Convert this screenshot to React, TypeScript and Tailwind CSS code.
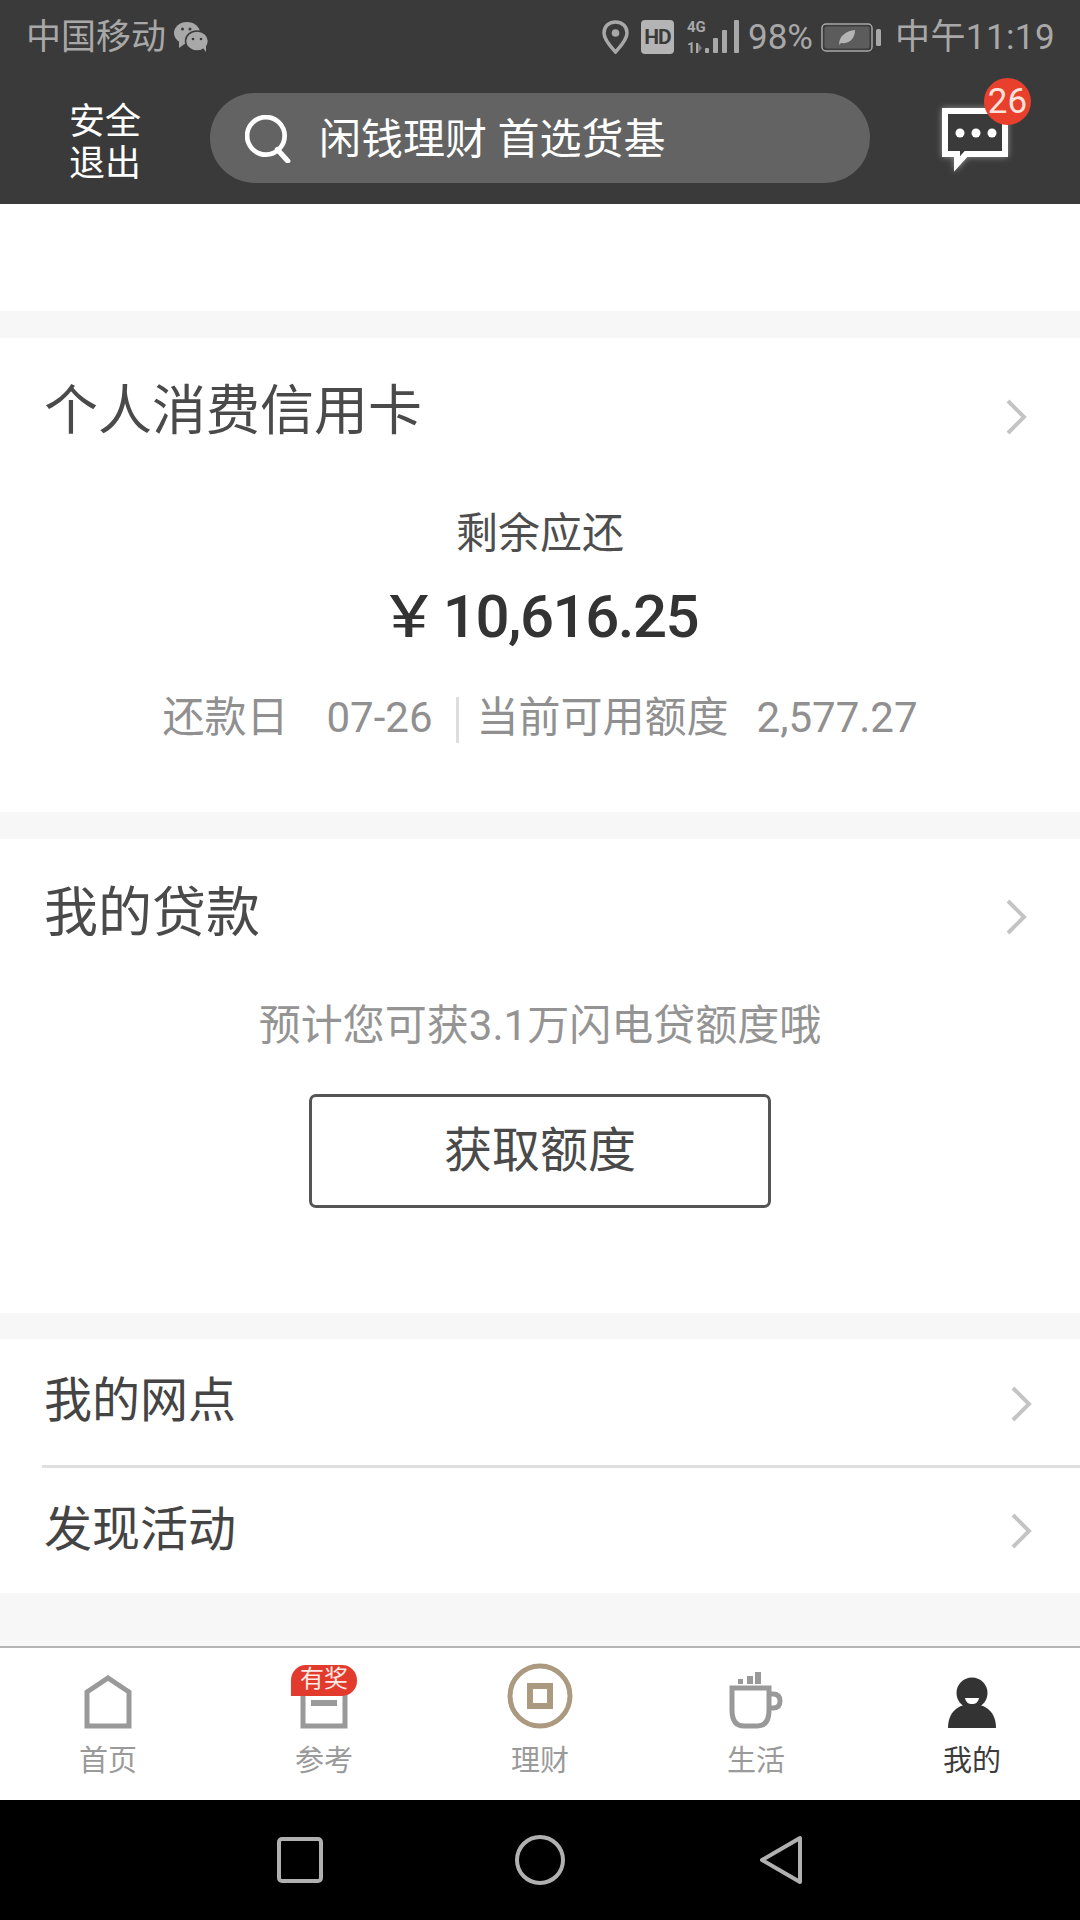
const CJK = "font-['Roboto','Noto_Sans_CJK_SC',sans-serif]";

function Chevron() {
  return (
    <svg width="22" height="36" viewBox="0 0 22 36" fill="none" className="shrink-0">
      <path d="M3 2 L19 18 L3 34" stroke="#c4c4c4" strokeWidth="4" />
    </svg>
  );
}

function StatusBar() {
  return (
    <div className="h-[72px] flex items-center justify-between pl-[26px] pr-[25px] pt-[2px] text-[#a8a8a8]">
      <div className="flex items-center gap-[7px]">
        <span className="text-[35px] leading-none">中国移动</span>
        <svg width="36" height="32" viewBox="0 0 36 32">
          <ellipse cx="14" cy="12" rx="13" ry="11" fill="#a8a8a8" />
          <path d="M6 19 L6 27 L13 22 Z" fill="#a8a8a8" />
          <ellipse cx="24" cy="20" rx="11.5" ry="10" fill="#a8a8a8" stroke="#3a3a3a" strokeWidth="1.5" />
          <path d="M30 27 L33 31 L33 24 Z" fill="#a8a8a8" />
          <circle cx="9.5" cy="8" r="1.5" fill="#3a3a3a" />
          <circle cx="17" cy="8" r="1.5" fill="#3a3a3a" />
          <circle cx="20" cy="18" r="1.3" fill="#3a3a3a" />
          <circle cx="28" cy="18" r="1.3" fill="#3a3a3a" />
        </svg>
      </div>
      <div className="flex items-center">
        <svg width="27" height="34" viewBox="0 0 27 34">
          <path d="M13.5 2 C6 2 2 7 2 13 C2 20 9 27 13.5 32 C18 27 25 20 25 13 C25 7 21 2 13.5 2 Z" fill="none" stroke="#a8a8a8" strokeWidth="3.5" />
          <circle cx="13.5" cy="13" r="3.8" fill="#a8a8a8" />
        </svg>
        <div className="ml-[12px] w-[33px] h-[34px] rounded-[4px] bg-[#b4b4b4] flex items-center justify-center text-[#3a3a3a] text-[21px] font-bold leading-none tracking-[-1px]">
          HD
        </div>
        <svg width="52" height="36" viewBox="0 0 52 36" className="ml-[13px]">
          <text x="0" y="13" fontSize="15" fontWeight="700" fill="#a8a8a8" fontFamily="Roboto">4G</text>
          <text x="0" y="34" fontSize="14" fontWeight="700" fill="#a8a8a8" fontFamily="Roboto">1</text>
          <path d="M9 24 h2 v10 h-2z" fill="#a8a8a8" />
          <path d="M11 24 l4 5 l-4 5z" fill="#777777" />
          <rect x="18" y="29" width="4" height="5" rx="1" fill="#a8a8a8" />
          <rect x="26" y="19" width="5" height="15" rx="1" fill="#a8a8a8" />
          <rect x="35" y="11" width="5" height="23" rx="1" fill="#a8a8a8" />
          <rect x="47" y="1" width="5" height="33" rx="1" fill="#a8a8a8" />
        </svg>
        <span className="ml-[9px] w-[63px] text-[35px] leading-none">98%</span>
        <svg width="61" height="29" viewBox="0 0 61 29" className="ml-[10px]">
          <rect x="1" y="1" width="50" height="27" rx="4" fill="none" stroke="#a8a8a8" strokeWidth="1.5" />
          <rect x="3.5" y="3.5" width="45" height="22" rx="2" fill="#5c5c5c" />
          <path d="M18 22 C18 12 26 8 34 7 C34 16 28 21 20 20 Z" fill="#b4b4b4" />
          <rect x="55" y="6" width="5" height="17" rx="1.5" fill="#a8a8a8" />
        </svg>
        <span className="ml-[13px] text-[35px] leading-none tracking-[0.4px] whitespace-nowrap">中午11:19</span>
      </div>
    </div>
  );
}

function Header() {
  return (
    <div className="h-[132px] flex pt-[21px] pl-[69px] text-white">
      <div className="w-[71px] text-[36px] leading-[42px] flex flex-col items-start mt-[8px] whitespace-nowrap">
        <span>安全</span>
        <span>退出</span>
      </div>
      <div className="ml-[70px] w-[660px] h-[90px] rounded-full bg-[#636363] flex items-center pl-[35px]">
        <svg width="48" height="48" viewBox="0 0 46 46" fill="none" className="mt-[2px]">
          <circle cx="20" cy="20" r="18" stroke="white" strokeWidth="4.5" />
          <path d="M31 33 L41 44" stroke="white" strokeWidth="5" strokeLinecap="round" />
        </svg>
        <span className="ml-[26px] mt-[3px] text-[42px] leading-none whitespace-pre">闲钱理财 首选货基</span>
      </div>
      <div className="relative ml-[72px] mt-[15px] w-[66px] h-[70px]">
        <svg width="70" height="66" viewBox="0 0 70 66" fill="none" className="absolute left-0 top-0 overflow-visible drop-shadow-[0_0_3px_rgba(255,255,255,0.45)]">
          <path d="M3 3 H63 V46 H24 L15 56 V46 H3 Z" stroke="white" strokeWidth="6" fill="#3a3a3a" />
          <circle cx="18" cy="25" r="4.5" fill="white" />
          <circle cx="34" cy="25" r="4.5" fill="white" />
          <circle cx="50" cy="25" r="4.5" fill="white" />
        </svg>
        <div className="absolute left-[42px] -top-[30px] w-[47px] h-[47px] rounded-full bg-[#e8402c] flex items-center justify-center text-[35px] leading-none text-[#fbe3dc]">
          26
        </div>
      </div>
    </div>
  );
}

function ListRow({ title, h, mb, border }: { title: string; h: string; mb: string; border?: boolean }) {
  return (
    <div className={`relative ${h} bg-white flex items-center justify-between pl-[44px] pr-[48px]`}>
      <span className={`${mb} text-[48px] leading-none text-[#444444]`}>{title}</span>
      <Chevron />
      {border && <div className="absolute left-[42px] right-0 bottom-0 h-[3px] bg-[#dfdfdf]" />}
    </div>
  );
}

function Gap({ h }: { h: string }) {
  return <div className={`${h} shrink-0 bg-[#f7f7f7]`} />;
}

function Tab({ label, active, children }: { label: string; active?: boolean; children: React.ReactNode }) {
  return (
    <div className="flex-1 flex flex-col items-center relative">
      <div className="h-[81px] flex items-end justify-center">{children}</div>
      <span className={`mt-[18px] text-[29px] leading-none ${active ? "text-[#3c3c3c]" : "text-[#9a9a9a]"}`}>{label}</span>
    </div>
  );
}

export default function App() {
  return (
    <div className={`w-[1080px] h-[1920px] overflow-hidden flex flex-col bg-white ${CJK}`}>
      <div className="bg-[#3a3a3a] h-[204px] shrink-0">
        <StatusBar />
        <Header />
      </div>
      <div className="h-[107px] bg-white shrink-0" />
      <Gap h="h-[27px]" />

      <div className="h-[474px] bg-white shrink-0 flex flex-col">
        <div className="flex items-center justify-between pl-[44px] pr-[53px] pt-[47px]">
          <span className="text-[54px] leading-none text-[#4a4a4a]">个人消费信用卡</span>
          <div className="pt-[10px]"><Chevron /></div>
        </div>
        <div className="mt-[74px] text-center text-[42px] leading-none text-[#4e4e4e]">剩余应还</div>
        <div className="mt-[31px] pl-[10px] flex items-center justify-center text-[#333333] h-[62px]">
          <span className="inline-block w-[34px] text-center text-[60px] leading-none scale-x-125">¥</span>
          <span className="ml-[17px] text-[60px] leading-none font-medium tracking-[-1.5px]">10,616.25</span>
        </div>
        <div className="mt-[45px] flex items-center justify-center text-[42px] leading-none text-[#909090]">
          <span>还款日</span>
          <span className="ml-[38px]">07-26</span>
          <span className="ml-[23px] mt-[4px] w-[3px] h-[46px] bg-[#dedede]" />
          <span className="ml-[18px]">当前可用额度</span>
          <span className="ml-[28px]">2,577.27</span>
        </div>
      </div>
      <Gap h="h-[27px]" />

      <div className="h-[474px] bg-white shrink-0 flex flex-col">
        <div className="flex items-center justify-between pl-[44px] pr-[53px] pt-[48px]">
          <span className="text-[54px] leading-none text-[#4a4a4a]">我的贷款</span>
          <div className="pt-[5px]"><Chevron /></div>
        </div>
        <div className="mt-[64px] text-center text-[42px] leading-none text-[#949494]">预计您可获3.1万闪电贷额度哦</div>
        <div className="mt-[47px] mx-auto w-[462px] h-[114px] rounded-[7px] border-[3px] border-[#555555] flex items-center justify-center text-[48px] leading-none text-[#4a4a4a]">
          获取额度
        </div>
      </div>
      <Gap h="h-[26px]" />

      <ListRow title="我的网点" h="h-[129px]" mb="mb-[5px]" border />
      <ListRow title="发现活动" h="h-[125px]" mb="mb-[2px]" />
      <Gap h="h-[53px]" />

      <div className="h-[154px] shrink-0 border-t-[2px] border-[#b4b4b4] bg-white flex">
        <Tab label="首页">
          <svg width="48" height="54" viewBox="0 0 48 54" fill="none">
            <path d="M3 51 V17 L24 3 L45 17 V51 Z" stroke="#999999" strokeWidth="5" />
          </svg>
        </Tab>
        <Tab label="参考">
          <div className="relative w-[48px] h-[54px]">
            <svg width="48" height="54" viewBox="0 0 48 54" fill="none">
              <path d="M3 51 V12 H45 V51 Z" stroke="#999999" strokeWidth="5" />
              <rect x="11" y="25" width="26" height="6" fill="#999999" />
            </svg>
            <div className="absolute -left-[9px] -top-[10px] w-[66px] h-[31px] rounded-t-[15px] rounded-br-[15px] rounded-bl-none bg-[#e23a2c] text-[#fde9e4] text-[24px] leading-[29px] text-center">
              有奖
            </div>
          </div>
        </Tab>
        <Tab label="理财">
          <svg width="66" height="66" viewBox="0 0 66 66" fill="none">
            <circle cx="33" cy="33" r="30" stroke="#ab9a80" strokeWidth="5" />
            <rect x="23" y="23" width="20" height="20" stroke="#ab9a80" strokeWidth="6" />
          </svg>
        </Tab>
        <Tab label="生活">
          <svg width="54" height="58" viewBox="0 0 54 58" fill="none">
            <rect x="9" y="8" width="5" height="5" fill="#999999" />
            <rect x="18" y="5" width="6" height="8" fill="#999999" />
            <rect x="26" y="1" width="6" height="12" fill="#999999" />
            <path d="M3 17 H40 V39 Q40 55 28 55 H15 Q3 55 3 39 Z" stroke="#999999" strokeWidth="5" />
            <path d="M40 23 H44 Q51 23 51 30 Q51 37 44 37 H40" stroke="#999999" strokeWidth="5" />
          </svg>
        </Tab>
        <Tab label="我的" active>
          <svg width="48" height="52" viewBox="0 0 48 52">
            <circle cx="24" cy="16" r="15.5" fill="#333333" />
            <path d="M0 51 C0 36 9 27 24 27 C39 27 48 36 48 51 Z" fill="#333333" />
            <path d="M17 21 H31 C30 26 27 27 24 27 C21 27 18 26 17 21 Z" fill="white" />
          </svg>
        </Tab>
      </div>

      <div className="flex-1 bg-black flex items-center pl-[277px]">
        <svg width="46" height="46" viewBox="0 0 46 46" fill="none">
          <rect x="2" y="2" width="42" height="42" rx="3" stroke="#b0b0b0" strokeWidth="4" />
        </svg>
        <svg width="50" height="50" viewBox="0 0 50 50" fill="none" className="ml-[192px]">
          <circle cx="25" cy="25" r="23" stroke="#b0b0b0" strokeWidth="4" />
        </svg>
        <svg width="44" height="50" viewBox="0 0 44 50" fill="none" className="ml-[194px]">
          <path d="M41 3 V47 L3 25 Z" stroke="#b0b0b0" strokeWidth="4" strokeLinejoin="round" />
        </svg>
      </div>
    </div>
  );
}
